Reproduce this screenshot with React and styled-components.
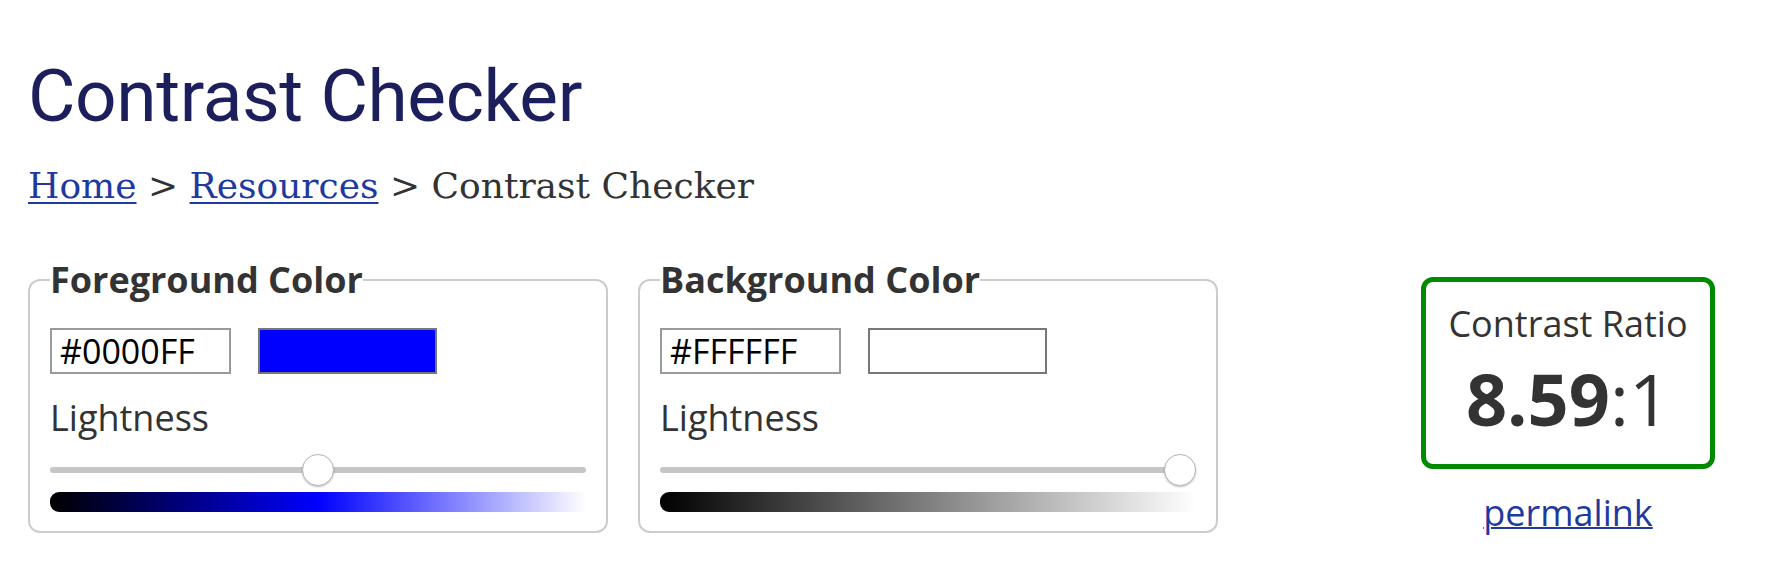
import React from 'react'
import styled, {createGlobalStyle} from 'styled-components'

const GlobalStyle = createGlobalStyle`
    body {
        margin: 0;
        background: #fff;
        font-family: "Open Sans", "Liberation Sans", sans-serif;
        color: #333;
    }
`
const Page = styled.main({
    padding: "52px 28px 40px",
})
const Heading = styled.h1({
    margin: 0,
    fontFamily: "Roboto, \"Liberation Sans\", sans-serif",
    fontWeight: 400,
    fontSize: "73px",
    lineHeight: "89px",
    color: "#1d1f5c",
    letterSpacing: "-0.4px",
})
const Breadcrumb = styled.nav({
    marginTop: "23px",
    fontFamily: "\"DejaVu Serif\", \"Liberation Serif\", serif",
    fontSize: "36px",
    lineHeight: "43px",
    color: "#333",
})
const Crumb = styled.a({
    color: "#1f3a9e",
    textDecoration: "underline",
    textUnderlineOffset: "4px",
    textDecorationThickness: "2px",
})
const Tools = styled.div({
    display: "flex",
    alignItems: "flex-start",
    gap: "30px",
    marginTop: "48px",
})
const Panel = styled.fieldset({
    boxSizing: "border-box",
    width: "580px",
    margin: 0,
    padding: "23px 20px 19px",
    border: "2px solid #cccccc",
    borderRadius: "12px",
    minWidth: 0,
})
const Legend = styled.legend({
    padding: 0,
    fontWeight: 700,
    fontSize: "36px",
    lineHeight: "50px",
    color: "#333",
})
const ColorRow = styled.div({
    display: "flex",
    gap: "27px",
})
const HexInput = styled.input({
    boxSizing: "border-box",
    width: "181px",
    height: "46px",
    margin: 0,
    padding: "0 8px",
    border: "2px solid #9a9a9a",
    borderRadius: 0,
    fontFamily: "\"Open Sans\", sans-serif",
    fontSize: "34px",
    color: "#000",
    background: "#fff",
    outline: "none",
})
const Swatch = styled.div`
    box-sizing: border-box;
    width: 179px;
    height: 46px;
    border: 2px solid #777;
    background: ${props => props.color};
`
const Label = styled.label({
    display: "block",
    marginTop: "19px",
    fontSize: "36px",
    lineHeight: "49px",
    color: "#333",
})
const Range = styled.input`
    display: block;
    width: 100%;
    height: 32px;
    margin: 12px 0 0;
    padding: 0;
    background: transparent;
    -webkit-appearance: none;
    appearance: none;
    &::-webkit-slider-runnable-track {
        height: 6px;
        background: #c6c6c6;
        border-radius: 3px;
    }
    &::-webkit-slider-thumb {
        -webkit-appearance: none;
        width: 32px;
        height: 32px;
        margin-top: -13px;
        border-radius: 50%;
        background: #fff;
        border: 1px solid #b8b8b8;
        box-shadow: 0 1px 2px rgba(0, 0, 0, 0.25);
    }
`
const Scale = styled.div`
    height: 20px;
    margin-top: 6px;
    border-radius: 9px 0 0 9px;
    background: linear-gradient(to right, ${props => props.stops});
`
const Result = styled.div({
    flex: "0 0 356px",
    marginLeft: "auto",
    marginTop: "22px",
    display: "flex",
    flexDirection: "column",
    alignItems: "center",
})
const RatioBox = styled.div({
    boxSizing: "border-box",
    width: "294px",
    height: "192px",
    padding: "17px 0 0",
    border: "5px solid #008a00",
    borderRadius: "12px",
    textAlign: "center",
})
const RatioLabel = styled.div({
    fontSize: "36px",
    lineHeight: "49px",
    color: "#333",
})
const RatioValue = styled.div({
    marginTop: "14px",
    fontSize: "72px",
    lineHeight: "72px",
    color: "#333",
    "& strong": {fontWeight: 700},
})
const Permalink = styled.a({
    marginTop: "19px",
    fontSize: "36px",
    lineHeight: "49px",
    color: "#1f3a9e",
    textDecoration: "underline",
    textDecorationThickness: "2px",
})

function ColorPanel({title, id, hex, stops, lightness}) {
    return (
        <Panel>
            <Legend>{title}</Legend>
            <ColorRow>
                <HexInput id={id} defaultValue={hex} aria-label={title + " hex"} />
                <Swatch color={hex} />
            </ColorRow>
            <Label htmlFor={id + "-l"}>Lightness</Label>
            <Range id={id + "-l"} type="range" min="0" max="100" defaultValue={lightness} />
            <Scale stops={stops} />
        </Panel>
    )
}

function App() {
    return (
        <Page>
            <GlobalStyle />
            <Heading>Contrast Checker</Heading>
            <Breadcrumb>
                <Crumb href="#">Home</Crumb> &gt; <Crumb href="#">Resources</Crumb> &gt; Contrast Checker
            </Breadcrumb>
            <Tools>
                <ColorPanel title="Foreground Color" id="fg" hex="#0000FF" lightness={50}
                    stops="#000 0%, #0000ff 50%, #fff 100%" />
                <ColorPanel title="Background Color" id="bg" hex="#FFFFFF" lightness={100}
                    stops="#000 0%, #fff 100%" />
                <Result>
                    <RatioBox>
                        <RatioLabel>Contrast Ratio</RatioLabel>
                        <RatioValue><strong>8.59</strong>:1</RatioValue>
                    </RatioBox>
                    <Permalink href="#">permalink</Permalink>
                </Result>
            </Tools>
        </Page>
    )
}
export default App
